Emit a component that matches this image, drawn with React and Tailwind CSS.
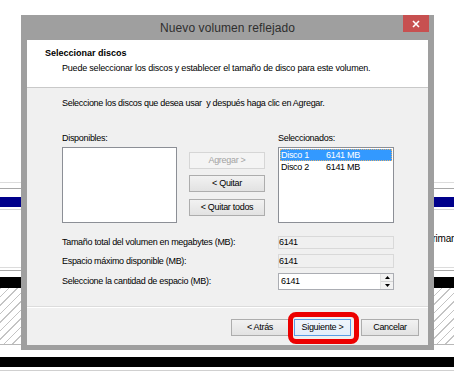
import React from 'react';

const font = "font-['Liberation_Sans',Arial,sans-serif]";

function Btn({ children, w, disabled, primary }) {
  let cls = 'border-[#adadad] bg-gradient-to-b from-[#f2f2f2] to-[#e2e2e2] text-black';
  if (disabled) cls = 'border-[#d6d6d6] bg-[#f4f4f4] text-[#a3a3a3]';
  if (primary) cls = 'border-[#5a9fe6] bg-gradient-to-b from-[#f0f6fc] to-[#e3eefa] text-black';
  return (
    <div className={`${w} h-[17px] border ${cls} flex items-center justify-center text-[9px] tracking-[-0.3px] leading-none`}>
      {children}
    </div>
  );
}

function FieldRow({ label, h, mt, children }) {
  return (
    <div className={`flex items-center ${mt}`}>
      <div className="w-[216px] text-[9px] tracking-[-0.3px] leading-none">{label}</div>
      <div className={`w-[116px] ${h}`}>{children}</div>
    </div>
  );
}

export default function App() {
  return (
    <div className={`relative w-[454px] h-[376px] overflow-hidden bg-white ${font}`}>
      {/* background: disk management view behind the dialog */}
      <div className="flex flex-col">
        <div className="h-[182px]" />
        <div className="h-[1px] bg-[#dcdcdc]" />
        <div className="h-[5px]" />
        <div className="h-[1px] bg-[#a8a8a8]" />
        <div className="h-[8px]" />
        <div className="h-[10px] bg-[#00008b]" />
        <div className="h-[2px]" />
        <div className="h-[1px] bg-[#d6d6d6]" />
        <div className="h-[57px] flex items-center pl-[426px] text-[10px] tracking-[-0.2px] text-black whitespace-nowrap">Primaria</div>
        <div className="h-[1px] bg-[#dcdcdc]" />
        <div className="h-[2px]" />
        <div className="h-[1px] bg-[#a8a8a8]" />
        <div className="h-[6px]" />
        <div className="h-[11px] bg-black" />
        <div className="h-[56px] bg-[repeating-linear-gradient(135deg,#c4c4c4_0px,#c4c4c4_1px,#ffffff_1px,#ffffff_6px)]" />
        <div className="h-[1px] bg-[#b8b8b8]" />
        <div className="h-[12px]" />
        <div className="h-[10px] bg-black" />
        <div className="h-[3px]" />
        <div className="h-[1px] bg-[#d0d0d0]" />
      </div>

      {/* dialog window */}
      <div className="absolute left-[21px] top-[15px] w-[413px] h-[335px] bg-[#9f9f9f] flex flex-col px-[6px] pb-[5px]">
        <div className="relative h-[25px] -mx-[6px] flex items-center justify-center text-[12px] text-[#2e2e2e] tracking-[0.1px]">
          Nuevo volumen reflejado
          <div className="absolute right-[5px] top-0 w-[26px] h-[17px] bg-[#c75050] flex items-center justify-center">
            <svg width="8" height="8" viewBox="0 0 8 8">
              <path d="M1 1L7 7M7 1L1 7" stroke="#fff" strokeWidth="1.6" />
            </svg>
          </div>
        </div>

        <div className="flex-1 flex flex-col bg-[#f0f0f0] text-black">
          <div className="h-[48px] bg-white border-b border-[#c9c9c9] pt-[8px] pl-[18px]">
            <div className="text-[9px] font-bold leading-[11px]">Seleccionar discos</div>
            <div className="pl-[17px] mt-[4px] text-[9px] tracking-[-0.2px] leading-[11px]">
              Puede seleccionar los discos y establecer el tamaño de disco para este volumen.
            </div>
          </div>

          <div className="flex-1 flex flex-col pt-[10px] pl-[35px] border-b border-[#dcdcdc]">
            <div className="text-[9px] tracking-[-0.3px] leading-[11px]">
              Seleccione los discos que desea usar&nbsp; y después haga clic en Agregar.
            </div>

            <div className="flex mt-[24px] h-[11px] text-[9px] tracking-[-0.3px] leading-[11px]">
              <div className="w-[216px]">Disponibles:</div>
              <div>Seleccionados:</div>
            </div>

            <div className="flex mt-[3px] h-[76px]">
              <div className="w-[115px] h-full bg-white border border-[#8c8f96]" />
              <div className="ml-[12px] w-[76px] flex flex-col pt-[5px] gap-[6px]">
                <Btn w="w-[76px]" disabled>Agregar &gt;</Btn>
                <Btn w="w-[76px]">&lt; Quitar</Btn>
                <div className="mt-[1px]">
                  <Btn w="w-[76px]">&lt; Quitar todos</Btn>
                </div>
              </div>
              <div className="ml-[13px] w-[116px] h-full bg-white border border-[#8c8f96] p-[1px] text-[9px] tracking-[-0.3px] leading-none">
                <div className="flex items-center h-[12px] bg-[#3399ff] text-white outline outline-1 outline-dotted outline-[#e0b070] -outline-offset-1 pl-[1px]">
                  <span className="w-[45px]">Disco 1</span>
                  <span>6141 MB</span>
                </div>
                <div className="flex items-center h-[13px] pl-[1px]">
                  <span className="w-[45px]">Disco 2</span>
                  <span>6141 MB</span>
                </div>
              </div>
            </div>

            <FieldRow label="Tamaño total del volumen en megabytes (MB):" h="h-[13px]" mt="mt-[13px]">
              <div className="h-full bg-[#f0f0f0] border border-[#d9d9d9] flex items-center text-[9px] tracking-[-0.3px] leading-none">6141</div>
            </FieldRow>
            <FieldRow label="Espacio máximo disponible (MB):" h="h-[14px]" mt="mt-[5px]">
              <div className="h-full bg-[#f0f0f0] border border-[#d9d9d9] flex items-center text-[9px] tracking-[-0.3px] leading-none">6141</div>
            </FieldRow>
            <FieldRow label="Seleccione la cantidad de espacio (MB):" h="h-[17px]" mt="mt-[5px]">
              <div className="h-full bg-white border border-[#abadb3] flex items-center text-[9px] tracking-[-0.3px] leading-none">
                <span className="flex-1 pl-[2px]">6141</span>
                <div className="w-[13px] h-full flex flex-col border-l border-[#e2e2e2]">
                  <div className="flex-1 flex items-center justify-center bg-[#f2f2f2] border-b border-[#d4d4d4]">
                    <svg width="5" height="3" viewBox="0 0 5 3"><path d="M2.5 0L5 3H0Z" fill="#000" /></svg>
                  </div>
                  <div className="flex-1 flex items-center justify-center bg-[#f2f2f2]">
                    <svg width="5" height="3" viewBox="0 0 5 3"><path d="M0 0H5L2.5 3Z" fill="#000" /></svg>
                  </div>
                </div>
              </div>
            </FieldRow>
          </div>

          <div className="h-[38px] border-t border-white flex justify-end items-start pt-[11px] pr-[9px]">
            <Btn w="w-[58px]">&lt; Atrás</Btn>
            <div className="ml-[5px]">
              <Btn w="w-[57px]" primary>Siguiente &gt;</Btn>
            </div>
            <div className="ml-[10px]">
              <Btn w="w-[58px]">Cancelar</Btn>
            </div>
          </div>
        </div>
      </div>

      {/* red highlight annotation */}
      <div className="absolute left-[288px] top-[312px] w-[71px] h-[32px] border-[5px] border-[#ec0000] rounded-[8px]" />
    </div>
  );
}
